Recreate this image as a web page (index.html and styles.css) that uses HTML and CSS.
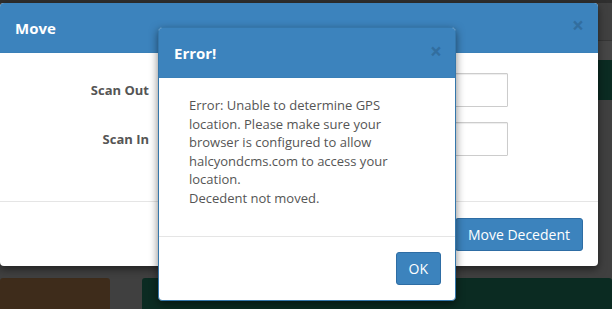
FILE: index.html
```html
<!DOCTYPE html>
<html lang="en">
<head>
  <meta charset="UTF-8" />
  <title>Move Decedent</title>
  <link rel="stylesheet" href="styles.css">
</head>
<body>
  <!-- Page behind the backdrop -->
  <div class="page">
    <div class="page-top"></div>
    <div class="page-side">
      <div class="side-bar"></div>
      <div class="side-green"></div>
    </div>
    <div class="page-bottom">
      <div class="tile tile-brown"></div>
      <div class="tile tile-green"></div>
    </div>
  </div>

  <!-- Move modal -->
  <div class="modal modal-move">
    <div class="modal-header">
      <h4 class="modal-title">Move</h4>
      <span class="close">&times;</span>
    </div>
    <div class="modal-body">
      <div class="form-row">
        <label class="form-label">Scan Out</label>
        <div class="form-input"></div>
      </div>
      <div class="form-row">
        <label class="form-label">Scan In</label>
        <div class="form-input"></div>
      </div>
    </div>
    <div class="modal-footer">
      <button class="btn">Move Decedent</button>
    </div>
  </div>

  <!-- Error modal -->
  <div class="modal modal-error">
    <div class="modal-header">
      <h4 class="modal-title">Error!</h4>
      <span class="close">&times;</span>
    </div>
    <div class="modal-body error-body">
      <p>Error: Unable to determine GPS location. Please make sure your browser is configured to allow halcyondcms.com to access your location.<br>Decedent not moved.</p>
    </div>
    <div class="modal-footer">
      <button class="btn">OK</button>
    </div>
  </div>
</body>
</html>
```

FILE: styles.css
```css
* {
  margin: 0;
  padding: 0;
  box-sizing: border-box;
  font-family: 'Open Sans', 'Liberation Sans', sans-serif;
}
body {
  background-color: #404040;
  width: 612px;
  height: 309px;
  overflow: hidden;
  position: relative;
}
/* Page behind the backdrop */
.page {
  height: 309px;
  display: flex;
  flex-direction: column;
}
.page-top {
  height: 3px;
  background-color: #2f2f2f;
}
.page-side {
  margin-top: 37px;
  margin-left: 598px;
  display: flex;
  flex-direction: column;
}
.side-bar {
  height: 20px;
  background-color: #464646;
  border-top: 1px solid #363636;
}
.side-green {
  height: 40px;
  background-color: #0b2b22;
}
.page-bottom {
  margin-top: auto;
  height: 31px;
  display: flex;
  gap: 32px;
}
.tile {
  border-radius: 3px 3px 0 0;
}
.tile-brown {
  width: 110px;
  background-color: #3e2c1b;
}
.tile-green {
  flex: 1;
  background-color: #0b2b22;
}
/* Modals */
.modal {
  position: absolute;
  background-color: #fff;
  border-radius: 4px;
  box-shadow: 0 3px 9px rgba(0, 0, 0, 0.5);
  overflow: hidden;
  display: flex;
  flex-direction: column;
}
.modal-move {
  left: 0;
  top: 3px;
  width: 598px;
  height: 263px;
}
.modal-error {
  left: 158px;
  top: 27px;
  width: 298px;
  height: 274px;
  border: 1px solid #3577ab;
}
.modal-header {
  background-color: #3c83bd;
  color: #fff;
  height: 50px;
  padding: 0 16px 0 15px;
  display: flex;
  align-items: center;
  justify-content: space-between;
  border-bottom: 1px solid #3a80b8;
  flex-shrink: 0;
}
.modal-title {
  font-size: 15px;
  font-weight: 700;
}
.close {
  font-size: 21px;
  font-weight: 700;
  line-height: 1;
  color: #2f6796;
  opacity: 0.75;
}
.modal-move .close {
  margin-top: -4px;
  margin-right: -2px;
}
.modal-error .close {
  margin-top: -2px;
  margin-right: -3px;
}
.modal-body {
  flex: 1;
  padding: 20px 15px;
  display: flex;
  flex-direction: column;
  gap: 15px;
}
.form-row {
  display: flex;
  align-items: center;
}
.form-label {
  width: 134px;
  text-align: right;
  font-size: 13px;
  font-weight: 700;
  color: #555;
  margin-right: 16px;
}
.form-input {
  width: 343px;
  height: 34px;
  border: 1px solid #ccc;
  border-radius: 1px;
  box-shadow: inset 0 1px 1px rgba(0, 0, 0, 0.075);
}
.modal-footer {
  height: 65px;
  flex-shrink: 0;
  border-top: 1px solid #e5e5e5;
  padding: 0 15px;
  display: flex;
  align-items: center;
  justify-content: flex-end;
}
.btn {
  background-color: #3c83bd;
  color: #fff;
  border: 1px solid #2e6da4;
  border-radius: 3px;
  height: 33px;
  padding: 0 12px;
  font-size: 14px;
}
.modal-error .modal-footer {
  height: 64px;
  padding: 0 14px;
}
.modal-error .modal-header {
  height: 50px;
  padding-left: 15px;
}
.error-body {
  padding: 18px 30px;
}
.error-body p {
  font-size: 13px;
  line-height: 18.5px;
  color: #555;
}
```
